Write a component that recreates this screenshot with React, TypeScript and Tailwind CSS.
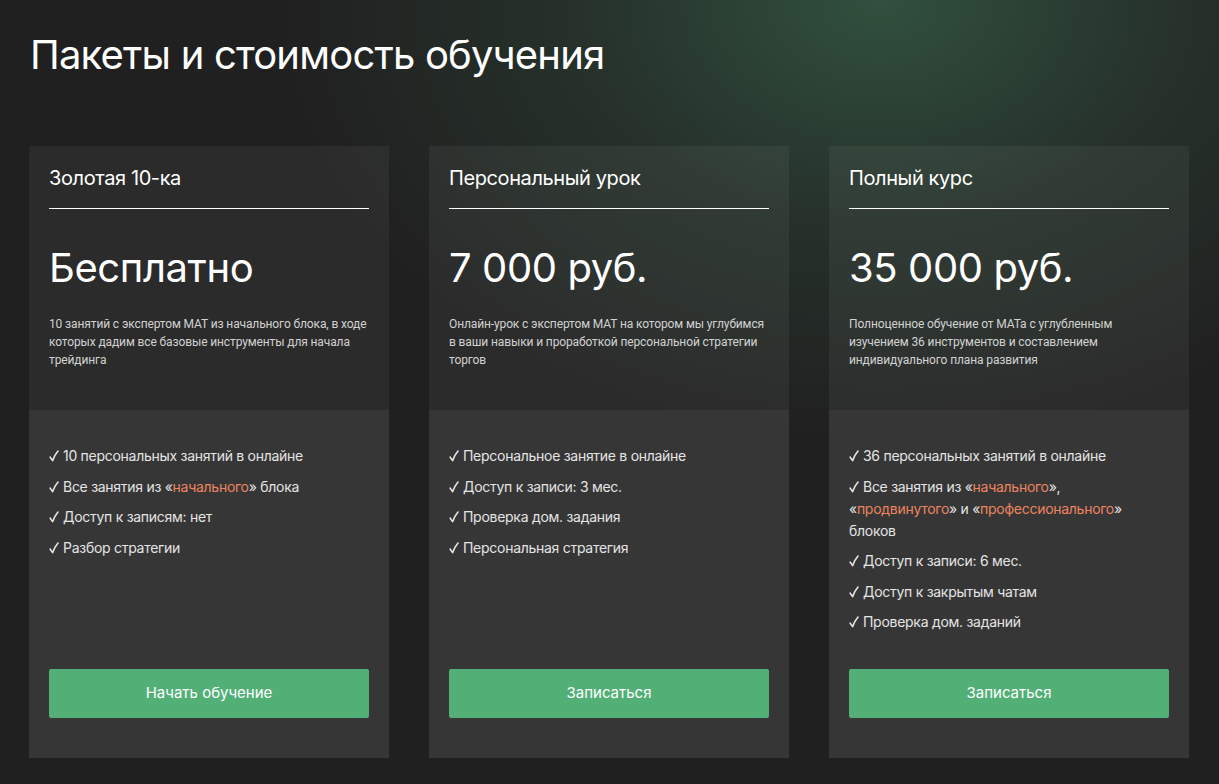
import React from "react";

type Plan = {
  name: string;
  price: string;
  desc: string;
  features: React.ReactNode[];
  cta: string;
};

const Hl = ({ children }: { children: React.ReactNode }) => (
  <span className="text-[#ec8460]">{children}</span>
);

const Check = () => (
  <svg
    viewBox="0 0 10 12"
    className="mr-[4px] inline-block h-[12px] w-[10px] align-[-1px]"
    fill="none"
    stroke="currentColor"
    strokeWidth="1.6"
    strokeLinecap="round"
    strokeLinejoin="round"
  >
    <path d="M1.2 7.2 L3.6 10.6 C5 6.8 6.8 3.6 9 1" />
  </svg>
);

const plans: Plan[] = [
  {
    name: "Золотая 10-ка",
    price: "Бесплатно",
    desc: "10 занятий с экспертом МАТ из начального блока, в ходе которых дадим все базовые инструменты для начала трейдинга",
    features: [
      "10 персональных занятий в онлайне",
      <>Все занятия из «<Hl>начального</Hl>» блока</>,
      "Доступ к записям: нет",
      "Разбор стратегии",
    ],
    cta: "Начать обучение",
  },
  {
    name: "Персональный урок",
    price: "7 000 руб.",
    desc: "Онлайн-урок с экспертом МАТ на котором мы углубимся в ваши навыки и проработкой персональной стратегии торгов",
    features: [
      "Персональное занятие в онлайне",
      "Доступ к записи: 3 мес.",
      "Проверка дом. задания",
      "Персональная стратегия",
    ],
    cta: "Записаться",
  },
  {
    name: "Полный курс",
    price: "35 000 руб.",
    desc: "Полноценное обучение от МАТа с углубленным изучением 36 инструментов и составлением индивидуального плана развития",
    features: [
      "36 персональных занятий в онлайне",
      <>
        Все занятия из «<Hl>начального</Hl>», «<Hl>продвинутого</Hl>» и «<Hl>профессионального</Hl>» блоков
      </>,
      "Доступ к записи: 6 мес.",
      "Доступ к закрытым чатам",
      "Проверка дом. заданий",
    ],
    cta: "Записаться",
  },
];

function PlanCard({ plan }: { plan: Plan }) {
  return (
    <div className="flex w-[360px] flex-col">
      {/* top */}
      <div className="h-[264px] bg-white/[0.05] px-5">
        <div className="border-b border-white pb-[16px] pt-[18px]">
          <h3 className="text-[20px] leading-[28px] font-normal tracking-[-0.02em] text-white">{plan.name}</h3>
        </div>
        <div className="mt-[35px] text-[40px] leading-[48px] font-normal tracking-[-0.01em] text-white">
          {plan.price}
        </div>
        <p
          className="mt-[23px] text-[12px] leading-[18px] tracking-[-0.01em] text-[#d2d2d2]"
          style={{ fontFamily: "Roboto, sans-serif" }}
        >
          {plan.desc}
        </p>
      </div>

      {/* bottom */}
      <div className="flex h-[348px] flex-col bg-[#363636] px-5 pb-10 pt-[35px]">
        <ul className="flex flex-col gap-[8.5px]">
          {plan.features.map((f, i) => (
            <li key={i} className="text-[14px] leading-[22px] tracking-[-0.02em] text-[#e4e4e4]">
              <Check />
              {f}
            </li>
          ))}
        </ul>
        <button className="mt-auto h-[49px] w-full rounded-[2px] bg-[#52b077] text-[15px] text-white">
          {plan.cta}
        </button>
      </div>
    </div>
  );
}

export default function App() {
  return (
    <div
      className="min-h-screen bg-[#202020] bg-[radial-gradient(ellipse_600px_440px_at_880px_0px,#31503e_0%,rgba(47,76,59,0.4)_50%,rgba(32,32,32,0)_100%)] px-[29px] pt-[30px]"
      style={{ fontFamily: "Inter, 'Noto Sans', sans-serif" }}
    >
      <h1 className="pl-px text-[40px] leading-[50px] font-normal tracking-[-0.02em] text-white">
        Пакеты и стоимость обучения
      </h1>
      <div className="mt-[66px] flex gap-10">
        {plans.map((p) => (
          <PlanCard key={p.name} plan={p} />
        ))}
      </div>
    </div>
  );
}
